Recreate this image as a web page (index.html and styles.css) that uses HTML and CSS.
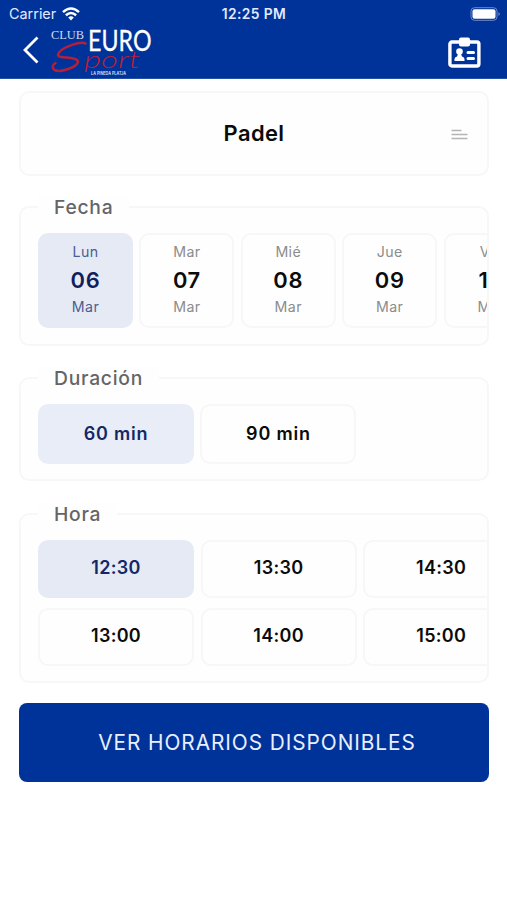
FILE: index.html
```html
<!DOCTYPE html>
<html lang="es">
<head>
<meta charset="utf-8">
<title>Club Euro Sport</title>
<link rel="stylesheet" href="styles.css">
</head>
<body>
<header class="header">
  <div class="status">
    <div class="carrier"><span>Carrier</span>
      <svg width="18" height="14" viewBox="0 0 18 14" fill="none" stroke="#fff" stroke-width="2.5"><path d="M1 5.1Q9-2.1 17 5.1M3.9 8.3Q9 3.7 14.1 8.3"/><path d="M9 13.4L6.2 10.4Q9 8 11.8 10.4Z" fill="#fff" stroke="none"/></svg>
    </div>
    <time class="clock">12:25 PM</time>
    <svg class="battery" width="31" height="14" viewBox="0 0 31 14"><rect x="1" y=".7" width="26" height="12.6" rx="3.5" fill="none" stroke="#6f8bc6" stroke-width="1"/><rect x="2.5" y="2.2" width="23" height="9.6" rx="2" fill="#fff"/><path d="M28.5 5Q31 7 28.5 9Z" fill="#7f98cc"/></svg>
  </div>
  <div class="bar">
    <svg class="back" width="16" height="28" viewBox="0 0 16 28"><path d="M14.5 1.5L2 14L14.5 26.5" fill="none" stroke="#fff" stroke-width="2.8"/></svg>
    <svg class="logo" width="104" height="50" viewBox="0 0 104 50">
      <text class="logo-club" x="1" y="11.5" textLength="33" lengthAdjust="spacingAndGlyphs">CLUB</text>
      <text class="logo-euro" x="38" y="23.5" textLength="63.5" lengthAdjust="spacingAndGlyphs">EURO</text>
      <path d="M35.5 16.5C30 14 9 21 8 28C8 32 28 29 28 35C27 40 11 46 4.500 43C2 41 2 38 5.500 36" fill="none" stroke="#b51f3c" stroke-width="2.500" stroke-linecap="round"/>
      <text class="logo-sport" x="34" y="40.500" textLength="56" lengthAdjust="spacingAndGlyphs">port</text>
      <text class="logo-place" x="41" y="47.5" textLength="35" lengthAdjust="spacingAndGlyphs">LA PINEDA PLATJA</text>
    </svg>
    <svg class="badge" width="33" height="32" viewBox="0 0 33 32"><rect x="1.9" y="5" width="29" height="24" rx="2" fill="none" stroke="#fff" stroke-width="3.4"/><rect x="11" y=".5" width="11" height="9" rx="2" fill="#fff"/><circle cx="11.5" cy="14.5" r="3.3" fill="#fff"/><path d="M6.5 24V22Q6.5 20 9 19.5L10 17H13L14 19.5Q16.5 20 16.5 22V24Z" fill="#fff"/><path d="M20 15.5H25.5M20 21.5H25.5" stroke="#fff" stroke-width="3" stroke-linecap="round"/></svg>
  </div>
</header>
<main class="main">
  <div class="sport"><h1>Padel</h1>
    <svg class="lines" width="17" height="11" viewBox="0 0 17 11" stroke="#b4b4b4" stroke-width="1.4"><path d="M.5 1.5H10.5M.5 5.5H16.5M.5 9.5H16.5"/></svg>
  </div>
  <section class="panel dates">
    <h2>Fecha</h2>
    <div class="row">
      <button class="day on"><span>Lun</span><b>06</b><span>Mar</span></button>
      <button class="day"><span>Mar</span><b>07</b><span>Mar</span></button>
      <button class="day"><span>Mié</span><b>08</b><span>Mar</span></button>
      <button class="day"><span>Jue</span><b>09</b><span>Mar</span></button>
      <button class="day"><span>Vie</span><b>10</b><span>Mar</span></button>
    </div>
  </section>
  <section class="panel duration">
    <h2>Duración</h2>
    <div class="row">
      <button class="slot on">60 min</button>
      <button class="slot">90 min</button>
    </div>
  </section>
  <section class="panel hours">
    <h2>Hora</h2>
    <div class="grid">
      <button class="slot on">12:30</button>
      <button class="slot">13:30</button>
      <button class="slot">14:30</button>
      <button class="slot">13:00</button>
      <button class="slot">14:00</button>
      <button class="slot">15:00</button>
    </div>
  </section>
  <button class="submit">VER HORARIOS DISPONIBLES</button>
</main>
</body>
</html>
```
FILE: styles.css
```css
* { box-sizing: border-box; }
body { margin: 0; background: #fff; font-family: Inter, "Liberation Sans", sans-serif; color: #0b0b0b; }
button { font: inherit; color: inherit; margin: 0; padding: 0; }
h1, h2 { margin: 0; }
svg { display: block; flex: none; }

.header { height: 79px; background: #003399; color: #fff; border-bottom: 1px solid #2450a8; }
.status { height: 27px; display: grid; grid-template-columns: 1fr auto 1fr; align-items: center; padding: 0 6px 0 9px; }
.carrier { display: flex; align-items: center; gap: 6px; font-size: 14.4px; color: #e3eaff; }
.clock { font-size: 13.8px; font-weight: 600; letter-spacing: .4px; margin-right: 2px; color: #e3eaff; }
.battery { justify-self: end; }
.bar { display: flex; align-items: flex-start; padding: 0 26px 0 23px; }
.back { margin-top: 9px; }
.logo { margin-left: 11px; }
.badge { margin: 10px 0 0 auto; }
.logo-club { font: 13px "Liberation Serif", serif; fill: #cfdcf5; }
.logo-euro { font: 400 29px Lato, sans-serif; fill: #fff; stroke: #fff; stroke-width: .3px; }
.logo-sport { font: italic 300 23px Lato, sans-serif; fill: #b51f3c; }
.logo-place { font: 600 4.2px Inter, sans-serif; fill: #dce6ff; }

.main { padding: 12px 18px 0 19px; }
.sport { height: 85px; border: 2px solid #f7f7f7; border-radius: 10px; background: #fefefe; display: grid; grid-template-columns: 1fr auto 1fr; align-items: center; padding: 0 19px; }
.sport h1 { grid-column: 2; font-size: 21.9px; font-weight: 600; letter-spacing: .4px; margin-top: -2px; }
.lines { justify-self: end; margin-top: 1px; }

.panel { border: 2px solid #f7f7f7; border-radius: 10px; background: #fefefe; padding-left: 17px; }
.panel h2 { width: fit-content; height: 24px; margin-top: -13px; padding: 0 16px; line-height: 24px; font-size: 19.3px; font-weight: 500; letter-spacing: .75px; color: #656565; background: #fefefe; }
.row { display: flex; gap: 6.4px; overflow: hidden; margin-top: 14px; }
.dates { height: 140px; margin-top: 29.5px; }
.duration { height: 104px; margin-top: 31px; }
.hours { height: 170px; margin-top: 32px; }
.grid { display: grid; grid-template-columns: repeat(3, 156px); grid-auto-rows: 58px; gap: 10px 6.6px; overflow: hidden; margin-top: 14px; }

.day, .slot { flex: none; border: 2px solid #f7f7f7; border-radius: 10px; background: #fefefe; }
.day { width: 95px; height: 95px; display: flex; flex-direction: column; align-items: center; justify-content: center; padding-bottom: 1px; font-size: 14.2px; color: #8c8c8c; letter-spacing: .4px; }
.day span { line-height: 20px; }
.day b { font-size: 21.9px; font-weight: 600; line-height: 33px; padding-top: 2px; color: #0b0b0b; letter-spacing: .7px; }
.slot { width: 156px; height: 60px; padding-bottom: 1px; font-size: 18px; font-weight: 600; letter-spacing: .8px; }
.grid .slot { height: 58px; padding-bottom: 3px; letter-spacing: .3px; }
.on { background: #e5eaf5; border-color: #e5eaf5; color: #132966; }
.duration .on { background: #e9edf7; border-color: #e9edf7; }
.day.on { color: #4b5d91; }
.day.on b { color: #101f5c; }

.submit { display: block; width: 100%; height: 79px; margin-top: 20.5px; padding: 0 0 1px 6px; border: 0; border-radius: 8px; background: #003399; color: #e8efff; font-size: 20.8px; letter-spacing: .95px; }
```
